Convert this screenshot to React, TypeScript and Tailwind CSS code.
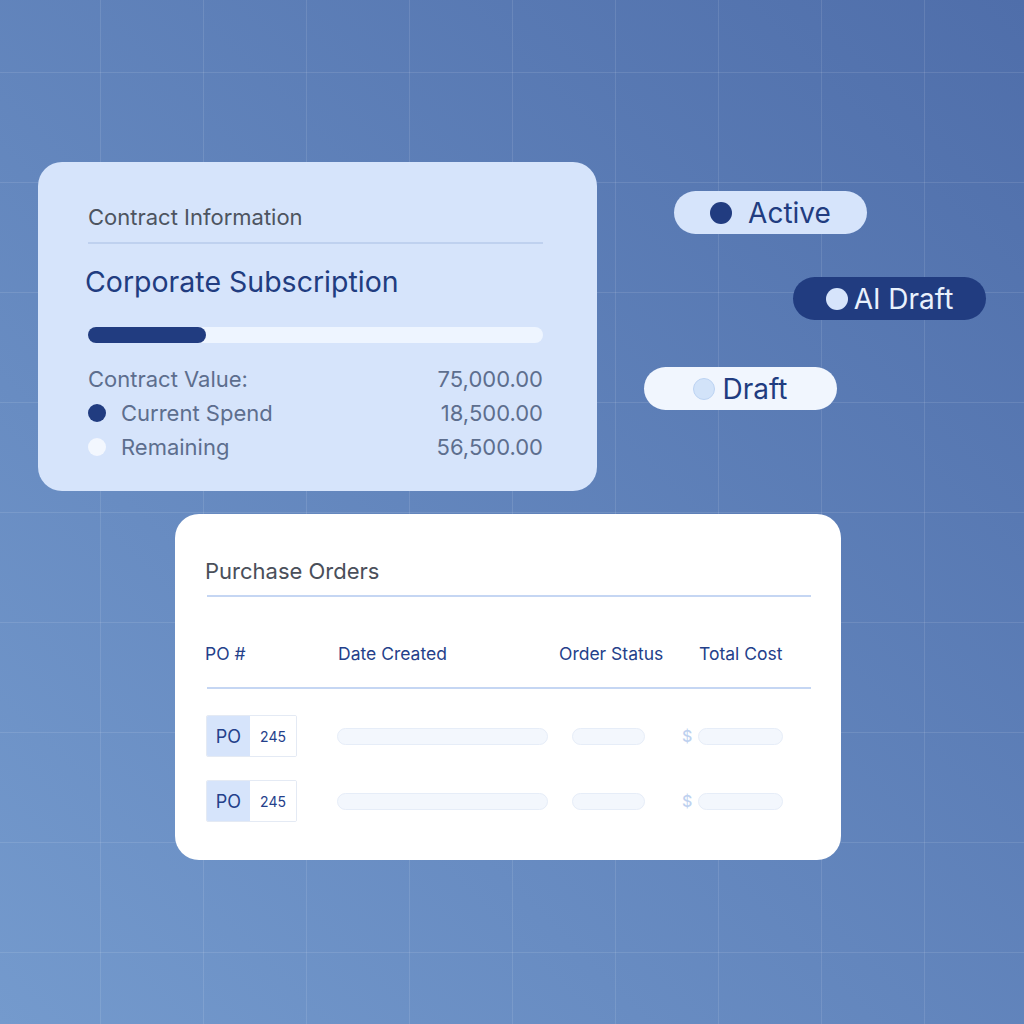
import React from "react";

const rows = [
  { label: "Current Spend", value: "18,500.00", dot: "bg-[#213c80]" },
  { label: "Remaining", value: "56,500.00", dot: "bg-[#f3f7fe]" },
];

function ContractCard() {
  return (
    <div className="ml-[38px] h-[329px] w-[559px] shrink-0 rounded-[24px] bg-[#d6e4fb] pl-[50px] pr-[54px] pt-[43px]">
      <div className="text-[22px] leading-[24px] text-[#4d5460]">Contract Information</div>
      <div className="mt-[13px] h-[2px] bg-[#bfd1ef]" />
      <div className="-ml-[3px] mt-[21px] text-[28.5px] leading-[34px] text-[#213c80]">
        Corporate Subscription
      </div>
      <div className="mt-[28px] h-[16px] rounded-full bg-[#eef5ff]">
        <div className="h-full w-[118px] rounded-full bg-[#213c80]" />
      </div>
      <div className="mt-[20px] flex justify-between text-[22px] leading-[33px] text-[#5d6e8e]">
        <span>Contract Value:</span>
        <span>75,000.00</span>
      </div>
      {rows.map((r) => (
        <div key={r.label} className="flex items-center justify-between text-[22px] leading-[34px] text-[#5d6e8e]">
          <span className="flex items-center">
            <span className={`mr-[15px] h-[18px] w-[18px] rounded-full ${r.dot}`} />
            {r.label}
          </span>
          <span>{r.value}</span>
        </div>
      ))}
    </div>
  );
}

function Badges() {
  return (
    <div className="ml-[47px] mt-[29px] flex flex-col items-start text-[28px] leading-[32px]">
      <div className="ml-[30px] flex h-[43px] w-[193px] items-center justify-center gap-[16px] rounded-full bg-[#d6e4fb] text-[#213c80]">
        <span className="h-[22px] w-[22px] rounded-full bg-[#213c80]" />
        <span>Active</span>
      </div>
      <div className="ml-[149px] mt-[43px] flex h-[43px] w-[193px] items-center justify-center gap-[6px] rounded-full bg-[#213c80] text-[#e9f1fd]">
        <span className="h-[22px] w-[22px] rounded-full bg-[#d6e4fb]" />
        <span>AI Draft</span>
      </div>
      <div className="mt-[47px] flex h-[43px] w-[193px] items-center justify-center gap-[7px] rounded-full bg-[#f1f6fe] text-[#213c80]">
        <span className="h-[22px] w-[22px] rounded-full border border-[#bcd3f3] bg-[#d2e3f9]" />
        <span>Draft</span>
      </div>
    </div>
  );
}

function OrderRow() {
  return (
    <div className="flex h-[42px] items-center">
      <div className="ml-[1px] flex h-full w-[91px] overflow-hidden rounded-[2px] border border-[#e4eaf4]">
        <div className="flex w-[43px] items-center justify-center bg-[#d6e4fb] text-[18px] text-[#24408a]">PO</div>
        <div className="flex flex-1 items-center justify-center bg-white text-[14px] text-[#24408a]">245</div>
      </div>
      <div className="ml-[40px] h-[17px] w-[211px] rounded-full border border-[#e6edf8] bg-[#f3f7fd]" />
      <div className="ml-[24px] h-[17px] w-[73px] rounded-full border border-[#e6edf8] bg-[#f3f7fd]" />
      <span className="ml-[37px] text-[16px] font-medium text-[#bed1ef]">$</span>
      <div className="ml-[6px] h-[17px] w-[85px] rounded-full border border-[#e6edf8] bg-[#f3f7fd]" />
    </div>
  );
}

function OrdersCard() {
  return (
    <div className="ml-[175px] mt-[23px] h-[346px] w-[666px] rounded-[24px] bg-white pl-[30px] pr-[30px] pt-[43px]">
      <div className="text-[22px] leading-[28px] text-[#4a4f5a]">Purchase Orders</div>
      <div className="ml-[2px] mt-[10px] h-[2px] bg-[#c5d6f3]" />
      <div className="mt-[45px] flex text-[17.5px] leading-[24px] text-[#24408a]">
        <span className="w-[133px]">PO #</span>
        <span className="w-[221px]">Date Created</span>
        <span className="w-[140px]">Order Status</span>
        <span>Total Cost</span>
      </div>
      <div className="ml-[2px] mt-[21px] h-[2px] bg-[#c5d6f3]" />
      <div className="mt-[26px] flex flex-col gap-[23px]">
        <OrderRow />
        <OrderRow />
      </div>
    </div>
  );
}

export default function App() {
  return (
    <div className="h-[1024px] w-[1024px] overflow-hidden bg-linear-to-bl from-[#4f6eaa] to-[#749acd] font-['Inter',sans-serif]">
      <div className="h-full w-full bg-[linear-gradient(to_right,rgba(255,255,255,0.1)_1px,transparent_1px),linear-gradient(to_bottom,rgba(255,255,255,0.1)_1px,transparent_1px)] bg-[size:103px_110px] bg-[position:100px_72px] pt-[162px]">
        <div className="flex items-start">
          <ContractCard />
          <Badges />
        </div>
        <OrdersCard />
      </div>
    </div>
  );
}
